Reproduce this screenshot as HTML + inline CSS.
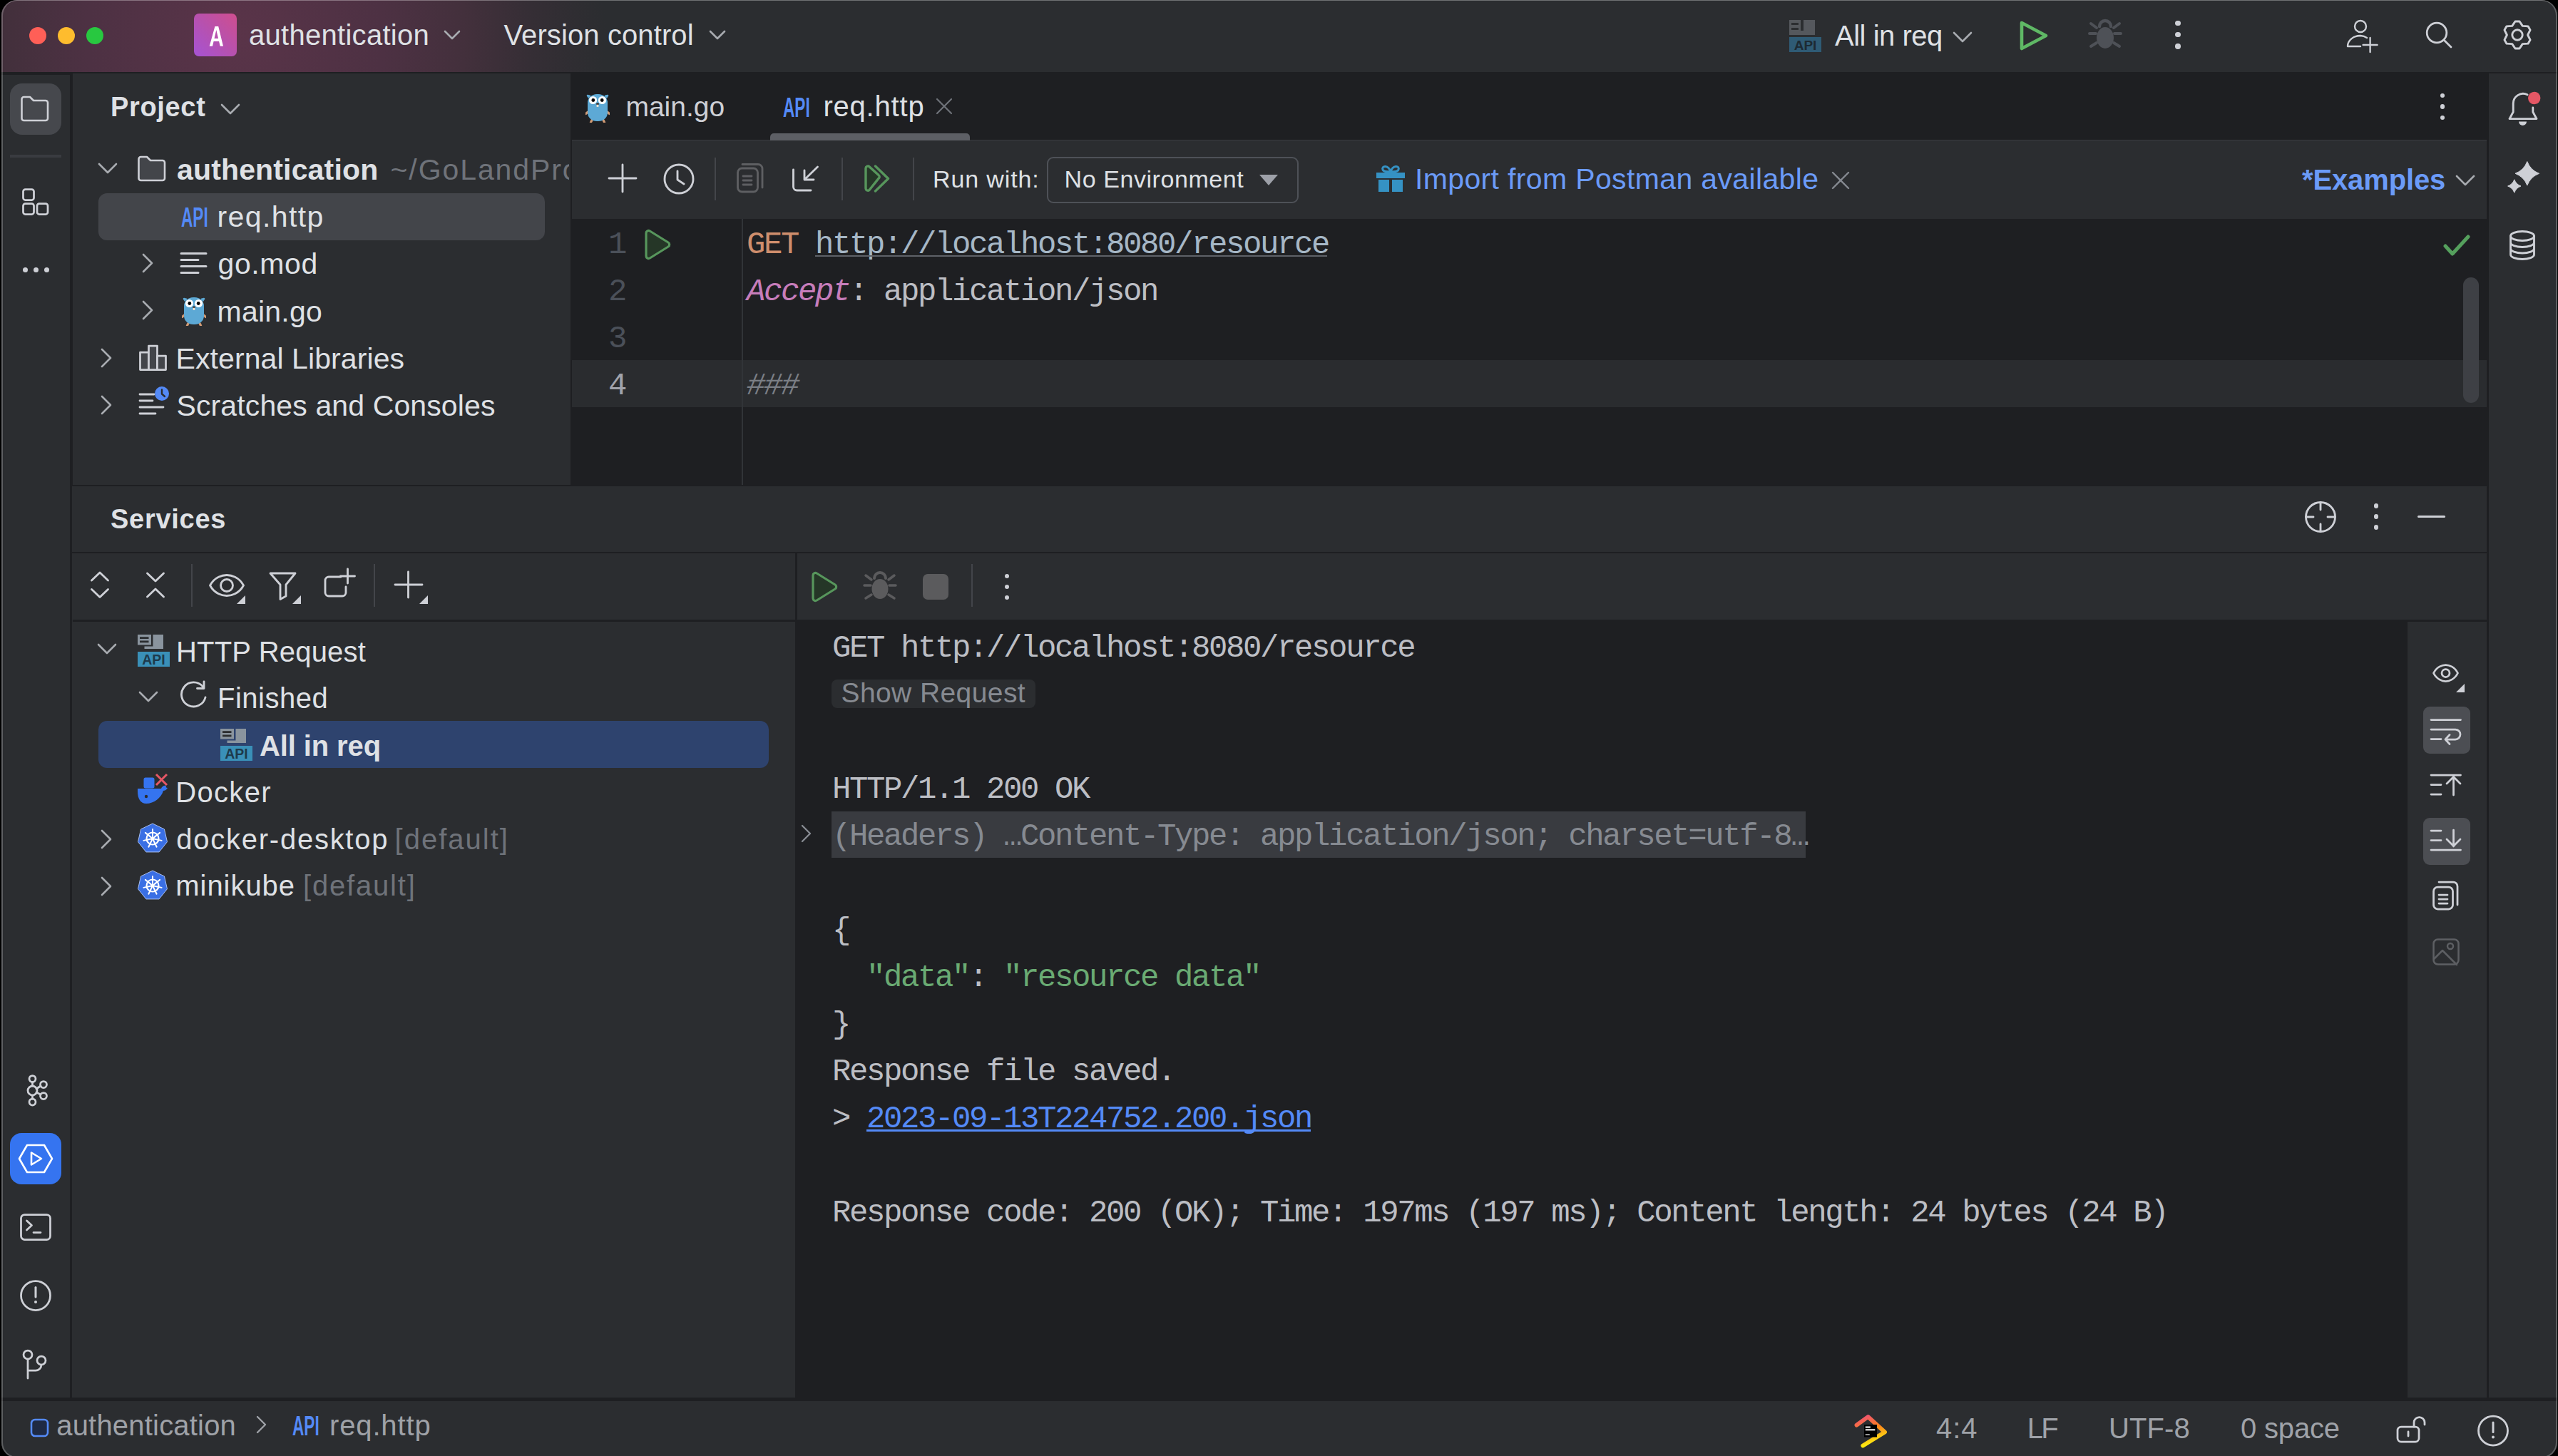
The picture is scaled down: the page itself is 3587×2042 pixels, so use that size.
<!DOCTYPE html><html><head><meta charset="utf-8"><style>
html,body{margin:0;padding:0;background:#000;width:3587px;height:2042px;overflow:hidden}
#win{position:absolute;left:2px;top:0;width:3584px;height:2045px;border-radius:22px;overflow:hidden;background:#2B2D30}
#c{position:absolute;left:-2px;top:0;width:3587px;height:2045px}
#c div,#c svg{position:absolute}
#bd{position:absolute;left:2px;top:0;width:3584px;height:2045px;border-radius:22px;box-sizing:border-box;border:2px solid rgba(255,255,255,0.24);border-top:1.2px solid rgba(255,255,255,0.32);pointer-events:none}
</style></head><body><div id="win"><div id="c">
<div style="left:0px;top:0px;width:3587px;height:101px;background:radial-gradient(ellipse 520px 520px at 330px 50px, #5a3449 0%, #4d3143 40%, #43303c 62%, #352e35 80%, #2B2D30 100%);"></div>
<div style="left:0px;top:101px;width:3587px;height:2px;background:#1E1F22;"></div>
<div style="left:41px;top:38px;width:24px;height:24px;border-radius:50%;background:#FF5F57"></div>
<div style="left:81px;top:38px;width:24px;height:24px;border-radius:50%;background:#FEBC2E"></div>
<div style="left:121px;top:38px;width:24px;height:24px;border-radius:50%;background:#28C840"></div>
<div style="left:272px;top:19px;width:60px;height:60px;border-radius:7px;background:linear-gradient(45deg,#A653D4 0%,#B751AE 50%,#CF4E8E 100%)"></div>
<svg style="left:290px;top:34px;" width="26" height="34" viewBox="0 0 26 34" fill="none"><path fill-rule="evenodd" fill="#FFFFFF" d="M11.4 2.9 L16.2 2.9 L23 30.8 L18.7 30.8 L17.09 24 L9.58 24 L8 30.8 L3.7 30.8 Z M13.3 8 L16.12 19.9 L10.53 19.9 Z"/></svg>
<div style="left:349px;top:29.43px;font-size:40px;line-height:40px;color:#DFE1E5;font-family:'Liberation Sans', sans-serif;white-space:pre;letter-spacing:0.285px;">authentication</div>
<svg style="left:622px;top:42px;" width="24" height="14" viewBox="0 0 24 14" fill="none"><path d="M2 2 L12 12 L22 2" stroke="#A8ABB0" stroke-width="2.6" stroke-linecap="round" stroke-linejoin="round"/></svg>
<div style="left:706.5px;top:29.43px;font-size:40px;line-height:40px;color:#DFE1E5;font-family:'Liberation Sans', sans-serif;white-space:pre;letter-spacing:0.107px;">Version control</div>
<svg style="left:994px;top:42px;" width="24" height="14" viewBox="0 0 24 14" fill="none"><path d="M2 2 L12 12 L22 2" stroke="#A8ABB0" stroke-width="2.6" stroke-linecap="round" stroke-linejoin="round"/></svg>
<div style="left:0px;top:101px;width:98px;height:1861px;background:#1E1F22;"></div>
<div style="left:0px;top:105px;width:98px;height:1857px;background:#2B2D30;"></div>
<div style="left:98px;top:103px;width:4px;height:1859px;background:#1E1F22;"></div>
<div style="left:102px;top:103px;width:698px;height:577px;background:#2B2D30;"></div>
<div style="left:800px;top:103px;width:2px;height:577px;background:#1E1F22;"></div>
<div style="left:802px;top:103px;width:2685px;height:93px;background:#1E1F22;"></div>
<div style="left:802px;top:196px;width:2685px;height:1.5px;background:#393B40;"></div>
<div style="left:802px;top:197px;width:2685px;height:110px;background:#2B2D30;"></div>
<div style="left:802px;top:307px;width:2685px;height:373px;background:#1E1F22;"></div>
<div style="left:101px;top:680px;width:3386px;height:2px;background:#1E1F22;"></div>
<div style="left:101px;top:682px;width:3386px;height:92px;background:#2B2D30;"></div>
<div style="left:101px;top:774px;width:3386px;height:2px;background:#1E1F22;"></div>
<div style="left:101px;top:776px;width:1014px;height:1186px;background:#2B2D30;"></div>
<div style="left:102px;top:869px;width:1013px;height:2.5px;background:#1E1F22;"></div>
<div style="left:1115px;top:776px;width:2.5px;height:1186px;background:#1E1F22;"></div>
<div style="left:1118px;top:776px;width:2369px;height:93px;background:#2B2D30;"></div>
<div style="left:1118px;top:869px;width:2369px;height:3px;background:#1E1F22;"></div>
<div style="left:1118px;top:872px;width:2258px;height:1090px;background:#1E1F22;"></div>
<div style="left:3376px;top:872px;width:111px;height:1090px;background:#2B2D30;"></div>
<div style="left:3487px;top:103px;width:3px;height:1859px;background:#1E1F22;"></div>
<div style="left:3490px;top:105px;width:97px;height:1857px;background:#2B2D30;"></div>
<div style="left:0px;top:1960px;width:3587px;height:5px;background:#1E1F22;"></div>
<div style="left:0px;top:1965px;width:3587px;height:80px;background:#2B2D30;"></div>
<svg style="left:2509px;top:28px;" width="46" height="46" viewBox="0 0 46 46" fill="none"><rect x="0" y="0" width="16" height="21" fill="#55585D"/><rect x="20" y="0" width="16" height="21" fill="#55585D"/><rect x="3" y="4" width="10" height="3" fill="#2B2D30"/><rect x="3" y="11" width="10" height="3" fill="#2B2D30"/><rect x="16" y="15" width="4" height="6" fill="#55585D"/><rect x="0" y="24" width="45" height="21" fill="#2F5B75"/><text x="22.5" y="42" text-anchor="middle" font-family="Liberation Sans" font-weight="700" font-size="19" fill="#1D2A33">API</text></svg>
<div style="left:2573px;top:29.53px;font-size:40px;line-height:40px;color:#DFE1E5;font-family:'Liberation Sans', sans-serif;white-space:pre;letter-spacing:-0.478px;">All in req</div>
<svg style="left:2738px;top:44px;" width="28" height="16" viewBox="0 0 28 16" fill="none"><path d="M2 2 L14.0 14.0 L26 2" stroke="#A8ABB0" stroke-width="2.6" stroke-linecap="round" stroke-linejoin="round"/></svg>
<svg style="left:2830px;top:27px;" width="44" height="46" viewBox="0 0 44 46" fill="none"><path d="M5 5 L39 23 L5 41 Z" stroke="#5FB865" stroke-width="4.6" stroke-linecap="round" stroke-linejoin="round"/></svg>
<svg style="left:2927px;top:25px;" width="50" height="48" viewBox="0 0 50 48" fill="none"><path d="M17 12 a8 8 0 0 1 16 0" stroke="#4E5157" stroke-width="4.4" stroke-linecap="round" stroke-linejoin="round"/><ellipse cx="25" cy="28" rx="12" ry="15" fill="#4E5157"/><path d="M3 22 H12 M38 22 H47 M5 8 L13 14 M45 8 L37 14 M5 40 L13 35 M45 40 L37 35 M3 22" stroke="#4E5157" stroke-width="4" stroke-linecap="round" stroke-linejoin="round"/></svg>
<div style="left:3050.3px;top:28.7px;width:7.4px;height:7.4px;border-radius:50%;background:#CED0D6"></div>
<div style="left:3050.3px;top:45.099999999999994px;width:7.4px;height:7.4px;border-radius:50%;background:#CED0D6"></div>
<div style="left:3050.3px;top:61.3px;width:7.4px;height:7.4px;border-radius:50%;background:#CED0D6"></div>
<svg style="left:3285px;top:24px;" width="56" height="52" viewBox="0 0 56 52" fill="none"><circle cx="25" cy="13" r="8" stroke="#CED0D6" stroke-width="2.4" stroke-linecap="round" stroke-linejoin="round"/><path d="M25 41 H7 a18 15 0 0 1 18 -15 a18 18 0 0 1 9 3" stroke="#CED0D6" stroke-width="2.4" stroke-linecap="round" stroke-linejoin="round"/><path d="M38.6 29 V49 M28.6 39 H48.6" stroke="#CED0D6" stroke-width="2.4" stroke-linecap="round" stroke-linejoin="round"/></svg>
<svg style="left:3395px;top:24px;" width="50" height="50" viewBox="0 0 50 50" fill="none"><circle cx="22" cy="22" r="13.8" stroke="#CED0D6" stroke-width="2.75" stroke-linecap="round" stroke-linejoin="round"/><path d="M32 32 L42 42" stroke="#CED0D6" stroke-width="2.75" stroke-linecap="round" stroke-linejoin="round"/></svg>
<svg style="left:3505px;top:25px;" width="50" height="50" viewBox="0 0 50 50" fill="none"><path d="M21.98 4.94 L28.02 4.94 L32.30 11.36 L40.00 11.85 L43.02 17.08 L39.60 24.00 L43.02 30.92 L40.00 36.15 L32.30 36.64 L28.02 43.06 L21.98 43.06 L17.70 36.64 L10.00 36.15 L6.98 30.92 L10.40 24.00 L6.98 17.08 L10.00 11.85 L17.70 11.36 Z" stroke="#CED0D6" stroke-width="2.9" stroke-linecap="round" stroke-linejoin="round"/><circle cx="25" cy="24" r="7.2" stroke="#CED0D6" stroke-width="2.9" stroke-linecap="round" stroke-linejoin="round"/></svg>
<div style="left:14px;top:117px;width:72px;height:72px;background:#46484D;border-radius:17px"></div>
<svg style="left:27px;top:133px;" width="44" height="40" viewBox="0 0 44 40" fill="none"><path d="M3.5 6 a3 3 0 0 1 3 -3 H15 l5 5 H37 a3 3 0 0 1 3 3 V33 a3 3 0 0 1 -3 3 H6.5 a3 3 0 0 1 -3 -3 Z" fill="none" stroke="#CED0D6" stroke-width="2.6" stroke-linecap="round" stroke-linejoin="round"/></svg>
<div style="left:14px;top:217px;width:72px;height:4px;background:#393B40;"></div>
<svg style="left:30px;top:263px;" width="40" height="40" viewBox="0 0 40 40" fill="none"><rect x="2.5" y="2.5" width="15" height="15" rx="3" stroke="#CED0D6" stroke-width="2.75" stroke-linecap="round" stroke-linejoin="round"/><rect x="2.5" y="22.5" width="15" height="15" rx="3" stroke="#CED0D6" stroke-width="2.75" stroke-linecap="round" stroke-linejoin="round"/><rect x="22" y="22.5" width="15" height="15" rx="3" stroke="#CED0D6" stroke-width="2.75" stroke-linecap="round" stroke-linejoin="round"/></svg>
<div style="left:31.5px;top:375.25px;width:7px;height:7px;border-radius:50%;background:#CED0D6"></div>
<div style="left:46.5px;top:375.25px;width:7px;height:7px;border-radius:50%;background:#CED0D6"></div>
<div style="left:61.5px;top:375.25px;width:7px;height:7px;border-radius:50%;background:#CED0D6"></div>
<div style="left:155px;top:130.83px;font-size:38px;line-height:38px;color:#DFE1E5;font-family:'Liberation Sans', sans-serif;white-space:pre;font-weight:700;letter-spacing:0.667px;">Project</div>
<svg style="left:309px;top:145px;" width="28" height="16" viewBox="0 0 28 16" fill="none"><path d="M2 2 L14.0 14.0 L26 2" stroke="#A8ABB0" stroke-width="2.6" stroke-linecap="round" stroke-linejoin="round"/></svg>
<svg style="left:137px;top:228px;" width="28" height="16" viewBox="0 0 28 16" fill="none"><path d="M2 2 L14.0 14.0 L26 2" stroke="#A8ABB0" stroke-width="2.6" stroke-linecap="round" stroke-linejoin="round"/></svg>
<svg style="left:191px;top:217px;" width="48" height="42" viewBox="0 0 48 42" fill="none"><path d="M3.5 6 a3 3 0 0 1 3 -3 H15 l5 5 H37 a3 3 0 0 1 3 3 V33 a3 3 0 0 1 -3 3 H6.5 a3 3 0 0 1 -3 -3 Z" fill="#43454A" stroke="#CED0D6" stroke-width="2.6" stroke-linecap="round" stroke-linejoin="round"/></svg>
<div style="left:248px;top:217.79px;font-size:41px;line-height:41px;color:#DFE1E5;font-family:'Liberation Sans', sans-serif;white-space:pre;font-weight:700;letter-spacing:0.154px;">authentication</div>
<div style="left:547.5px;top:217.79px;font-size:41px;line-height:41px;color:#6F737A;font-family:'Liberation Sans', sans-serif;white-space:pre;letter-spacing:1.909px;width:250px;overflow:hidden;">~/GoLandProj</div>
<div style="left:138px;top:271px;width:626px;height:66px;background:#43454A;border-radius:12px"></div>
<div style="left:254.0px;top:285.63px;font-size:38px;line-height:38px;color:#548AF7;font-family:'Liberation Sans', sans-serif;white-space:pre;font-weight:700;transform:scaleX(0.595);transform-origin:0 0;">API</div>
<div style="left:304.5px;top:284.04px;font-size:41px;line-height:41px;color:#DFE1E5;font-family:'Liberation Sans', sans-serif;white-space:pre;letter-spacing:1.393px;">req.http</div>
<svg style="left:199px;top:355px;" width="16" height="28" viewBox="0 0 16 28" fill="none"><path d="M2 2 L14.0 14.0 L2 26" stroke="#A8ABB0" stroke-width="2.6" stroke-linecap="round" stroke-linejoin="round"/></svg>
<svg style="left:252px;top:352px;" width="40" height="34" viewBox="0 0 40 34" fill="none"><path d="M2 3.5 H37 M2 12.5 H26 M2 21.5 H37 M2 30.5 H26" stroke="#CED0D6" stroke-width="3" stroke-linecap="round" stroke-linejoin="round"/></svg>
<div style="left:305.5px;top:350.29px;font-size:41px;line-height:41px;color:#DFE1E5;font-family:'Liberation Sans', sans-serif;white-space:pre;letter-spacing:0.6px;">go.mod</div>
<svg style="left:199px;top:421px;" width="16" height="28" viewBox="0 0 16 28" fill="none"><path d="M2 2 L14.0 14.0 L2 26" stroke="#A8ABB0" stroke-width="2.6" stroke-linecap="round" stroke-linejoin="round"/></svg>
<svg style="left:255px;top:415px;" width="34" height="42" viewBox="0 0 34 42" fill="none"><path d="M5 7 l-2 -3 l4 1 M29 7 l2 -3 l-4 1" stroke="#5DA9D5" stroke-width="2.6" stroke-linejoin="round"/><path d="M3.5 27 l-3 2.5 M30.5 27 l3 2.5 M9 38.5 l-1.5 3 M25 38.5 l1.5 3" stroke="#D09A74" stroke-width="3.2" stroke-linecap="round"/><rect x="3" y="2" width="28" height="38" rx="13" ry="12" fill="#5DA9D5"/><circle cx="10.5" cy="10.5" r="5.6" fill="#fff"/><circle cx="23.5" cy="10.5" r="5.6" fill="#fff"/><circle cx="10.8" cy="10.5" r="2.4" fill="#000"/><circle cx="23.2" cy="10.5" r="2.4" fill="#000"/><ellipse cx="17" cy="15.8" rx="2" ry="1.4" fill="#3a2a20"/><rect x="15.6" y="16.8" width="2.8" height="3.2" rx="0.6" fill="#F4E3D0"/></svg>
<div style="left:304.5px;top:416.54px;font-size:41px;line-height:41px;color:#DFE1E5;font-family:'Liberation Sans', sans-serif;white-space:pre;letter-spacing:0.25px;">main.go</div>
<svg style="left:141px;top:488px;" width="16" height="28" viewBox="0 0 16 28" fill="none"><path d="M2 2 L14.0 14.0 L2 26" stroke="#A8ABB0" stroke-width="2.6" stroke-linecap="round" stroke-linejoin="round"/></svg>
<svg style="left:194px;top:482px;" width="44" height="40" viewBox="0 0 44 40" fill="none"><rect x="2.5" y="12" width="12" height="24.5" stroke="#CED0D6" stroke-width="2.75" stroke-linecap="round" stroke-linejoin="round" fill="#43454A"/><rect x="14.5" y="3" width="12" height="33.5" stroke="#CED0D6" stroke-width="2.75" stroke-linecap="round" stroke-linejoin="round" fill="#43454A"/><rect x="26.5" y="17" width="12" height="19.5" stroke="#CED0D6" stroke-width="2.75" stroke-linecap="round" stroke-linejoin="round" fill="#43454A"/></svg>
<div style="left:246.5px;top:482.79px;font-size:41px;line-height:41px;color:#DFE1E5;font-family:'Liberation Sans', sans-serif;white-space:pre;letter-spacing:0.088px;">External Libraries</div>
<svg style="left:141px;top:554px;" width="16" height="28" viewBox="0 0 16 28" fill="none"><path d="M2 2 L14.0 14.0 L2 26" stroke="#A8ABB0" stroke-width="2.6" stroke-linecap="round" stroke-linejoin="round"/></svg>
<svg style="left:194px;top:542px;" width="48" height="44" viewBox="0 0 48 44" fill="none"><path d="M2 11 H22 M2 20 H20 M2 29 H35 M2 38 H24" stroke="#CED0D6" stroke-width="2.8" stroke-linecap="round" stroke-linejoin="round"/><circle cx="33" cy="10" r="10" fill="#548AF7"/><path d="M33 4.5 V10.5 L37 14" stroke="#2B2D30" stroke-width="2.4" stroke-linecap="round" stroke-linejoin="round"/></svg>
<div style="left:247.5px;top:548.54px;font-size:41px;line-height:41px;color:#DFE1E5;font-family:'Liberation Sans', sans-serif;white-space:pre;letter-spacing:0.119px;">Scratches and Consoles</div>
<svg style="left:821px;top:129.75px;" width="34" height="42" viewBox="0 0 34 42" fill="none"><path d="M5 7 l-2 -3 l4 1 M29 7 l2 -3 l-4 1" stroke="#5DA9D5" stroke-width="2.6" stroke-linejoin="round"/><path d="M3.5 27 l-3 2.5 M30.5 27 l3 2.5 M9 38.5 l-1.5 3 M25 38.5 l1.5 3" stroke="#D09A74" stroke-width="3.2" stroke-linecap="round"/><rect x="3" y="2" width="28" height="38" rx="13" ry="12" fill="#5DA9D5"/><circle cx="10.5" cy="10.5" r="5.6" fill="#fff"/><circle cx="23.5" cy="10.5" r="5.6" fill="#fff"/><circle cx="10.8" cy="10.5" r="2.4" fill="#000"/><circle cx="23.2" cy="10.5" r="2.4" fill="#000"/><ellipse cx="17" cy="15.8" rx="2" ry="1.4" fill="#3a2a20"/><rect x="15.6" y="16.8" width="2.8" height="3.2" rx="0.6" fill="#F4E3D0"/></svg>
<div style="left:877.4px;top:129.73px;font-size:39px;line-height:39px;color:#CED0D6;font-family:'Liberation Sans', sans-serif;white-space:pre;">main.go</div>
<div style="left:1097.9px;top:131.53px;font-size:38px;line-height:38px;color:#548AF7;font-family:'Liberation Sans', sans-serif;white-space:pre;font-weight:700;transform:scaleX(0.595);transform-origin:0 0;">API</div>
<div style="left:1154.4px;top:129.13px;font-size:40px;line-height:40px;color:#DFE1E5;font-family:'Liberation Sans', sans-serif;white-space:pre;letter-spacing:0.8px;">req.http</div>
<svg style="left:1311px;top:136px;" width="26" height="26" viewBox="0 0 26 26" fill="none"><path d="M3 3 L23 23 M23 3 L3 23" stroke="#6F737A" stroke-width="2.2" stroke-linecap="round" stroke-linejoin="round"/></svg>
<div style="left:1080px;top:187px;width:280px;height:10px;background:#5D5F65;border-radius:5px 5px 0 0"></div>
<div style="left:3421.8px;top:130.8px;width:6.4px;height:6.4px;border-radius:50%;background:#CED0D6"></div>
<div style="left:3421.8px;top:146.3px;width:6.4px;height:6.4px;border-radius:50%;background:#CED0D6"></div>
<div style="left:3421.8px;top:161.8px;width:6.4px;height:6.4px;border-radius:50%;background:#CED0D6"></div>
<svg style="left:851px;top:228px;" width="44" height="44" viewBox="0 0 44 44" fill="none"><path d="M22 3 V41 M3 22 H41" stroke="#CED0D6" stroke-width="2.85" stroke-linecap="round" stroke-linejoin="round"/></svg>
<svg style="left:929px;top:228px;" width="46" height="46" viewBox="0 0 46 46" fill="none"><circle cx="23" cy="23" r="20" stroke="#CED0D6" stroke-width="2.85" stroke-linecap="round" stroke-linejoin="round"/><path d="M21 12 V24 L30 30" stroke="#CED0D6" stroke-width="2.85" stroke-linecap="round" stroke-linejoin="round"/></svg>
<div style="left:1002px;top:221px;width:2px;height:60px;background:#43454A;"></div>
<svg style="left:1032px;top:228px;" width="42" height="44" viewBox="0 0 42 44" fill="none"><rect x="2.5" y="8" width="28" height="33" rx="6" stroke="#5E5F62" stroke-width="2.85" stroke-linecap="round" stroke-linejoin="round"/><path d="M9 2.5 H31 a6 6 0 0 1 6 6 V35" stroke="#5E5F62" stroke-width="2.85" stroke-linecap="round" stroke-linejoin="round"/><path d="M10 19 H22 M10 25 H22 M10 31 H22" stroke="#5E5F62" stroke-width="2.85" stroke-linecap="round" stroke-linejoin="round"/></svg>
<svg style="left:1108px;top:230px;" width="44" height="42" viewBox="0 0 44 42" fill="none"><path d="M4.5 8 V32 a5 5 0 0 0 5 5 H29" stroke="#CED0D6" stroke-width="2.85" stroke-linecap="round" stroke-linejoin="round"/><path d="M38.5 4 L20 22 M20 9 V22 H33" stroke="#CED0D6" stroke-width="2.85" stroke-linecap="round" stroke-linejoin="round"/></svg>
<div style="left:1180px;top:221px;width:2px;height:60px;background:#43454A;"></div>
<svg style="left:1209px;top:230px;" width="44" height="42" viewBox="0 0 44 42" fill="none"><path d="M5 6 a3 3 0 0 1 5 -2.3 L23 15.5 a3 3 0 0 1 0 4.8 L10 36.5 a3 3 0 0 1 -5 -2.3 Z" fill="#253627" stroke="#57965C" stroke-width="3.4" stroke-linecap="round" stroke-linejoin="round"/><path d="M18.5 3 L36.5 20.5 L18.5 38" stroke="#57965C" stroke-width="3.4" stroke-linecap="round" stroke-linejoin="round"/></svg>
<div style="left:1280px;top:221px;width:2px;height:60px;background:#43454A;"></div>
<div style="left:1308px;top:233.71px;font-size:34px;line-height:34px;color:#DFE1E5;font-family:'Liberation Sans', sans-serif;white-space:pre;letter-spacing:0.875px;">Run with:</div>
<div style="left:1468px;top:219.5px;width:353px;height:65px;background:transparent;box-sizing:border-box;border:2.5px solid #4E5157;border-radius:9px"></div>
<div style="left:1492.5px;top:233.71px;font-size:34px;line-height:34px;color:#DFE1E5;font-family:'Liberation Sans', sans-serif;white-space:pre;letter-spacing:0.577px;">No Environment</div>
<svg style="left:1764px;top:243px;" width="32" height="20" viewBox="0 0 32 20" fill="none"><path d="M2 2 H28 L15 17 Z" fill="#9DA0A8"/></svg>
<svg style="left:1928px;top:229px;" width="44" height="42" viewBox="0 0 44 42" fill="none"><rect x="2" y="13" width="40" height="8" fill="#3592C4"/><rect x="5" y="23" width="15" height="17" fill="#3592C4"/><rect x="24" y="23" width="15" height="17" fill="#3592C4"/><path d="M22 12 c-3 -10 -13 -9 -11 -3 c1 3 6 3 11 3 c5 0 10 0 11 -3 c2 -6 -8 -7 -11 3" stroke="#3592C4" stroke-width="3" stroke-linecap="round" stroke-linejoin="round"/><rect x="20" y="13" width="4" height="27" fill="#2B2D30" opacity="0"/></svg>
<div style="left:1984px;top:230.69px;font-size:41px;line-height:41px;color:#6B9BF8;font-family:'Liberation Sans', sans-serif;white-space:pre;letter-spacing:0.357px;">Import from Postman available</div>
<svg style="left:2567px;top:239px;" width="28" height="28" viewBox="0 0 28 28" fill="none"><path d="M3 3 L25 25 M25 3 L3 25" stroke="#868A91" stroke-width="2.4" stroke-linecap="round" stroke-linejoin="round"/></svg>
<div style="left:3228px;top:231.53px;font-size:40px;line-height:40px;color:#6B9BF8;font-family:'Liberation Sans', sans-serif;white-space:pre;font-weight:700;letter-spacing:-0.125px;">*Examples</div>
<svg style="left:3443px;top:245px;" width="28" height="16" viewBox="0 0 28 16" fill="none"><path d="M2 2 L14.0 14.0 L26 2" stroke="#A8ABB0" stroke-width="2.6" stroke-linecap="round" stroke-linejoin="round"/></svg>
<div style="left:802px;top:505px;width:2685px;height:66px;background:#2A2C2F;"></div>
<div style="left:1040px;top:307px;width:2px;height:373px;background:#313438;"></div>
<div style="left:853px;top:321.29px;font-size:44px;line-height:44px;color:#4B5059;font-family:'Liberation Mono', monospace;white-space:pre;letter-spacing:-2.3999999999999986px;">1</div>
<div style="left:853px;top:387.29px;font-size:44px;line-height:44px;color:#4B5059;font-family:'Liberation Mono', monospace;white-space:pre;letter-spacing:-2.3999999999999986px;">2</div>
<div style="left:853px;top:453.29px;font-size:44px;line-height:44px;color:#4B5059;font-family:'Liberation Mono', monospace;white-space:pre;letter-spacing:-2.3999999999999986px;">3</div>
<div style="left:853px;top:519.29px;font-size:44px;line-height:44px;color:#A1A3AB;font-family:'Liberation Mono', monospace;white-space:pre;letter-spacing:-2.3999999999999986px;">4</div>
<svg style="left:901px;top:321px;" width="42" height="44" viewBox="0 0 42 44" fill="none"><path d="M5 6 a3.5 3.5 0 0 1 5.3 -3 L36 19 a3.5 3.5 0 0 1 0 6 L10.3 41 a3.5 3.5 0 0 1 -5.3 -3 Z" fill="#253627" stroke="#57965C" stroke-width="3.2" stroke-linecap="round" stroke-linejoin="round"/></svg>
<div style="left:1047px;top:321.29px;font-size:44px;line-height:44px;color:#CF8E6D;font-family:'Liberation Mono', monospace;white-space:pre;letter-spacing:-2.3999999999999986px;">GET</div>
<div style="left:1143px;top:321.29px;font-size:44px;line-height:44px;color:#A6B7C6;font-family:'Liberation Mono', monospace;white-space:pre;letter-spacing:-2.3999999999999986px;">http://localhost:8080/resource</div>
<div style="left:1143px;top:357.5px;width:718px;height:2.5px;background:#5E6168;"></div>
<div style="left:1047px;top:387.29px;font-size:44px;line-height:44px;color:#C77DBB;font-family:'Liberation Mono', monospace;white-space:pre;letter-spacing:-2.3999999999999986px;font-style:italic;">Accept</div>
<div style="left:1191px;top:387.29px;font-size:44px;line-height:44px;color:#BCBEC4;font-family:'Liberation Mono', monospace;white-space:pre;letter-spacing:-2.3999999999999986px;">: application/json</div>
<div style="left:1047px;top:519.29px;font-size:44px;line-height:44px;color:#7A7E85;font-family:'Liberation Mono', monospace;white-space:pre;letter-spacing:-2.3999999999999986px;font-style:italic;">###</div>
<svg style="left:3426px;top:328px;" width="38" height="34" viewBox="0 0 38 34" fill="none"><path d="M3 17 L13 28 L35 4" stroke="#55A05D" stroke-width="5" stroke-linecap="round" stroke-linejoin="round"/></svg>
<div style="left:3454px;top:389px;width:22px;height:176px;background:#3E4045;border-radius:11px"></div>
<svg style="left:3514px;top:124px;" width="52" height="56" viewBox="0 0 52 56" fill="none"><path d="M30 8.8 A13.8 13.8 0 0 0 10.2 21.5 V33 L5 42.6 H43 L37.8 33 V27" stroke="#CED0D6" stroke-width="2.85" stroke-linecap="round" stroke-linejoin="round"/><path d="M18 46.6 H29 a5.5 5.3 0 0 1 -11 0 Z" fill="#CED0D6"/><circle cx="39.7" cy="13.5" r="8.7" fill="#E55765"/></svg>
<svg style="left:3510px;top:222px;" width="54" height="54" viewBox="0 0 54 54" fill="none"><path d="M33.80000000000018 4.500000000000011 Q38.33600000000018 16.76400000000001 50.60000000000018 21.30000000000001 Q38.33600000000018 25.836000000000013 33.80000000000018 38.10000000000001 Q29.26400000000018 25.836000000000013 17.00000000000018 21.30000000000001 Q29.26400000000018 16.76400000000001 33.80000000000018 4.500000000000011 Z" fill="#CED0D6" stroke="#CED0D6" stroke-width="1" stroke-linejoin="round"/><path d="M15.800000000000182 29.8 Q18.284000000000184 36.516 25.00000000000018 39 Q18.284000000000184 41.484 15.800000000000182 48.2 Q13.316000000000182 41.484 6.600000000000183 39 Q13.316000000000182 36.516 15.800000000000182 29.8 Z" fill="#CED0D6" stroke="#CED0D6" stroke-width="1" stroke-linejoin="round"/></svg>
<svg style="left:3517px;top:322px;" width="46" height="46" viewBox="0 0 46 46" fill="none"><ellipse cx="20" cy="9" rx="16.5" ry="6.5" stroke="#CED0D6" stroke-width="2.85" stroke-linecap="round" stroke-linejoin="round"/><path d="M3.5 9 V35 c0 3.6 7.4 6.5 16.5 6.5 s16.5 -2.9 16.5 -6.5 V9 M3.5 18 c0 3.6 7.4 6.5 16.5 6.5 s16.5 -2.9 16.5 -6.5 M3.5 26.5 c0 3.6 7.4 6.5 16.5 6.5 s16.5 -2.9 16.5 -6.5" stroke="#CED0D6" stroke-width="2.85" stroke-linecap="round" stroke-linejoin="round"/></svg>
<div style="left:155px;top:708.83px;font-size:38px;line-height:38px;color:#DFE1E5;font-family:'Liberation Sans', sans-serif;white-space:pre;font-weight:700;letter-spacing:0.714px;">Services</div>
<svg style="left:3230px;top:701px;" width="48" height="48" viewBox="0 0 48 48" fill="none"><circle cx="24" cy="24" r="20.5" stroke="#CED0D6" stroke-width="2.85" stroke-linecap="round" stroke-linejoin="round"/><path d="M24 3.5 V14 M24 34 V44.5 M3.5 24 H14 M34 24 H44.5" stroke="#CED0D6" stroke-width="2.85" stroke-linecap="round" stroke-linejoin="round"/></svg>
<div style="left:3328.9px;top:706.4px;width:6.2px;height:6.2px;border-radius:50%;background:#CED0D6"></div>
<div style="left:3328.9px;top:721.4px;width:6.2px;height:6.2px;border-radius:50%;background:#CED0D6"></div>
<div style="left:3328.9px;top:736.4px;width:6.2px;height:6.2px;border-radius:50%;background:#CED0D6"></div>
<div style="left:3390px;top:723px;width:39px;height:3px;background:#CED0D6;border-radius:2px"></div>
<svg style="left:126px;top:801px;" width="28" height="40" viewBox="0 0 28 40" fill="none"><path d="M2.5 13 L14 2 L25.5 13 M2.5 25.5 L14 36.5 L25.5 25.5" stroke="#CED0D6" stroke-width="2.85" stroke-linecap="round" stroke-linejoin="round"/></svg>
<svg style="left:204px;top:801px;" width="28" height="40" viewBox="0 0 28 40" fill="none"><path d="M2.5 3 L14 14 L25.5 3 M2.5 36 L14 25 L25.5 36" stroke="#CED0D6" stroke-width="2.85" stroke-linecap="round" stroke-linejoin="round"/></svg>
<div style="left:268px;top:791px;width:2px;height:60px;background:#43454A;"></div>
<svg style="left:292px;top:804px;" width="52" height="40" viewBox="0 0 52 40" fill="none"><path d="M2.5 17 C9 5 20 2.5 26 2.5 C32 2.5 43 5 49.5 17 C43 29 32 31.5 26 31.5 C20 31.5 9 29 2.5 17 Z" stroke="#CED0D6" stroke-width="2.85" stroke-linecap="round" stroke-linejoin="round"/><circle cx="26" cy="17" r="8.5" stroke="#CED0D6" stroke-width="2.85" stroke-linecap="round" stroke-linejoin="round"/></svg>
<svg style="left:332px;top:835px;" width="13" height="13" viewBox="0 0 13 13" fill="none"><path d="M12 0 V12 H0 Z" fill="#CED0D6"/></svg>
<svg style="left:376px;top:801px;" width="42" height="44" viewBox="0 0 42 44" fill="none"><path d="M3 3 H38 L25 19 V35 L17 39.5 V19 Z" stroke="#CED0D6" stroke-width="2.85" stroke-linecap="round" stroke-linejoin="round"/></svg>
<svg style="left:410px;top:835px;" width="13" height="13" viewBox="0 0 13 13" fill="none"><path d="M12 0 V12 H0 Z" fill="#CED0D6"/></svg>
<svg style="left:451px;top:795px;" width="52" height="50" viewBox="0 0 52 50" fill="none"><path d="M27 14 H10 a5 5 0 0 0 -5 5 V36 a5 5 0 0 0 5 5 H29 a5 5 0 0 0 5 -5 V28" stroke="#CED0D6" stroke-width="2.85" stroke-linecap="round" stroke-linejoin="round"/><path d="M36.5 3 V23 M26.5 13 H46.5" stroke="#CED0D6" stroke-width="2.85" stroke-linecap="round" stroke-linejoin="round"/></svg>
<div style="left:524px;top:791px;width:2px;height:60px;background:#43454A;"></div>
<svg style="left:551px;top:799px;" width="44" height="42" viewBox="0 0 44 42" fill="none"><path d="M21.5 3 V39 M3 21 H41" stroke="#CED0D6" stroke-width="2.85" stroke-linecap="round" stroke-linejoin="round"/></svg>
<svg style="left:588px;top:835px;" width="13" height="13" viewBox="0 0 13 13" fill="none"><path d="M12 0 V12 H0 Z" fill="#CED0D6"/></svg>
<svg style="left:136px;top:902px;" width="28" height="16" viewBox="0 0 28 16" fill="none"><path d="M2 2 L14.0 14.0 L26 2" stroke="#A8ABB0" stroke-width="2.6" stroke-linecap="round" stroke-linejoin="round"/></svg>
<svg style="left:193px;top:890px;" width="46" height="46" viewBox="0 0 46 46" fill="none"><rect x="0" y="0" width="19" height="14.5" fill="#8A949E"/><rect x="3" y="3.2" width="12.5" height="2.8" fill="#2B2D30"/><rect x="3" y="8.5" width="12.5" height="2.8" fill="#2B2D30"/><rect x="21.5" y="0" width="14.5" height="20" fill="#8A949E"/><rect x="9.5" y="16.5" width="26.5" height="3.5" fill="#8A949E"/><rect x="0" y="24" width="45" height="21" fill="#3A90B8"/><text x="22.5" y="42" text-anchor="middle" font-family="Liberation Sans" font-weight="700" font-size="19.5" fill="#1E3A4C">API</text></svg>
<div style="left:247px;top:893.63px;font-size:40px;line-height:40px;color:#DFE1E5;font-family:'Liberation Sans', sans-serif;white-space:pre;letter-spacing:0.182px;">HTTP Request</div>
<svg style="left:194px;top:969px;" width="28" height="16" viewBox="0 0 28 16" fill="none"><path d="M2 2 L14.0 14.0 L26 2" stroke="#A8ABB0" stroke-width="2.6" stroke-linecap="round" stroke-linejoin="round"/></svg>
<svg style="left:251px;top:954px;" width="42" height="44" viewBox="0 0 42 44" fill="none"><path d="M33.5 9 A17 17 0 1 0 37 24" stroke="#CED0D6" stroke-width="2.85" stroke-linecap="round" stroke-linejoin="round"/><path d="M35 2 V11.5 H25.5" stroke="#CED0D6" stroke-width="2.85" stroke-linecap="round" stroke-linejoin="round"/></svg>
<div style="left:305px;top:958.63px;font-size:40px;line-height:40px;color:#DFE1E5;font-family:'Liberation Sans', sans-serif;white-space:pre;letter-spacing:0.5px;">Finished</div>
<div style="left:138px;top:1011px;width:940px;height:66px;background:#2E436E;border-radius:12px"></div>
<svg style="left:308.75px;top:1022px;" width="46" height="46" viewBox="0 0 46 46" fill="none"><rect x="0" y="0" width="19" height="14.5" fill="#8A949E"/><rect x="3" y="3.2" width="12.5" height="2.8" fill="#2B2D30"/><rect x="3" y="8.5" width="12.5" height="2.8" fill="#2B2D30"/><rect x="21.5" y="0" width="14.5" height="20" fill="#8A949E"/><rect x="9.5" y="16.5" width="26.5" height="3.5" fill="#8A949E"/><rect x="0" y="24" width="45" height="21" fill="#3A90B8"/><text x="22.5" y="42" text-anchor="middle" font-family="Liberation Sans" font-weight="700" font-size="19.5" fill="#1E3A4C">API</text></svg>
<div style="left:364px;top:1025.63px;font-size:40px;line-height:40px;color:#DFE1E5;font-family:'Liberation Sans', sans-serif;white-space:pre;font-weight:700;letter-spacing:-0.111px;">All in req</div>
<svg style="left:191px;top:1082px;" width="50" height="50" viewBox="0 0 50 50" fill="none"><rect x="10.5" y="8.5" width="15" height="15" rx="2.5" fill="#3574F0"/><path d="M2 24 H35 c1 -3 4 -5 7 -4 c-1 2 0 3 2 3 c-2 3 -4 4 -6 4 C35 37 25 45 14 45 C6 45 2 38 2 28 Z" fill="#3574F0"/><circle cx="14" cy="35" r="2.2" fill="#2B2D30"/><path d="M28 4 L43 19 M43 4 L28 19" stroke="#E55765" stroke-width="3"/></svg>
<div style="left:246.3px;top:1090.63px;font-size:40px;line-height:40px;color:#DFE1E5;font-family:'Liberation Sans', sans-serif;white-space:pre;letter-spacing:1.3px;">Docker</div>
<svg style="left:141px;top:1163px;" width="16" height="28" viewBox="0 0 16 28" fill="none"><path d="M2 2 L14.0 14.0 L2 26" stroke="#A8ABB0" stroke-width="2.6" stroke-linecap="round" stroke-linejoin="round"/></svg>
<svg style="left:193px;top:1153.5px;" width="42" height="44" viewBox="0 0 42 44" fill="none"><path d="M21.00 1.00 L37.42 8.91 L41.47 26.67 L30.11 40.92 L11.89 40.92 L0.53 26.67 L4.58 8.91 Z" fill="#3A6FE4" stroke="#A9C0F2" stroke-width="1" stroke-linejoin="round"/><circle cx="21" cy="22" r="8.5" stroke="#fff" stroke-width="2.2"/><circle cx="21" cy="22" r="2.6" fill="#fff"/><path d="M21.00 19.00 L21.00 9.00" stroke="#fff" stroke-width="2" stroke-linecap="round"/><path d="M23.35 20.13 L31.16 13.89" stroke="#fff" stroke-width="2" stroke-linecap="round"/><path d="M23.92 22.67 L33.67 24.89" stroke="#fff" stroke-width="2" stroke-linecap="round"/><path d="M22.30 24.70 L26.64 33.71" stroke="#fff" stroke-width="2" stroke-linecap="round"/><path d="M19.70 24.70 L15.36 33.71" stroke="#fff" stroke-width="2" stroke-linecap="round"/><path d="M18.08 22.67 L8.33 24.89" stroke="#fff" stroke-width="2" stroke-linecap="round"/><path d="M18.65 20.13 L10.84 13.89" stroke="#fff" stroke-width="2" stroke-linecap="round"/></svg>
<div style="left:247.3px;top:1157.13px;font-size:40px;line-height:40px;color:#DFE1E5;font-family:'Liberation Sans', sans-serif;white-space:pre;letter-spacing:1.746px;">docker-desktop</div>
<div style="left:553.6px;top:1157.13px;font-size:40px;line-height:40px;color:#6F737A;font-family:'Liberation Sans', sans-serif;white-space:pre;letter-spacing:2.0px;">[default]</div>
<svg style="left:141px;top:1229px;" width="16" height="28" viewBox="0 0 16 28" fill="none"><path d="M2 2 L14.0 14.0 L2 26" stroke="#A8ABB0" stroke-width="2.6" stroke-linecap="round" stroke-linejoin="round"/></svg>
<svg style="left:193px;top:1219.5px;" width="42" height="44" viewBox="0 0 42 44" fill="none"><path d="M21.00 1.00 L37.42 8.91 L41.47 26.67 L30.11 40.92 L11.89 40.92 L0.53 26.67 L4.58 8.91 Z" fill="#3A6FE4" stroke="#A9C0F2" stroke-width="1" stroke-linejoin="round"/><circle cx="21" cy="22" r="8.5" stroke="#fff" stroke-width="2.2"/><circle cx="21" cy="22" r="2.6" fill="#fff"/><path d="M21.00 19.00 L21.00 9.00" stroke="#fff" stroke-width="2" stroke-linecap="round"/><path d="M23.35 20.13 L31.16 13.89" stroke="#fff" stroke-width="2" stroke-linecap="round"/><path d="M23.92 22.67 L33.67 24.89" stroke="#fff" stroke-width="2" stroke-linecap="round"/><path d="M22.30 24.70 L26.64 33.71" stroke="#fff" stroke-width="2" stroke-linecap="round"/><path d="M19.70 24.70 L15.36 33.71" stroke="#fff" stroke-width="2" stroke-linecap="round"/><path d="M18.08 22.67 L8.33 24.89" stroke="#fff" stroke-width="2" stroke-linecap="round"/><path d="M18.65 20.13 L10.84 13.89" stroke="#fff" stroke-width="2" stroke-linecap="round"/></svg>
<div style="left:246.3px;top:1222.13px;font-size:40px;line-height:40px;color:#DFE1E5;font-family:'Liberation Sans', sans-serif;white-space:pre;letter-spacing:0.957px;">minikube</div>
<div style="left:425px;top:1222.13px;font-size:40px;line-height:40px;color:#6F737A;font-family:'Liberation Sans', sans-serif;white-space:pre;letter-spacing:1.812px;">[default]</div>
<svg style="left:1135px;top:801px;" width="44" height="44" viewBox="0 0 44 44" fill="none"><path d="M5 6 a3.5 3.5 0 0 1 5.3 -3 L36 19 a3.5 3.5 0 0 1 0 6 L10.3 41 a3.5 3.5 0 0 1 -5.3 -3 Z" fill="#253627" stroke="#57965C" stroke-width="3.2" stroke-linecap="round" stroke-linejoin="round"/></svg>
<svg style="left:1209px;top:799px;" width="50" height="48" viewBox="0 0 50 48" fill="none"><path d="M17 12 a8 8 0 0 1 16 0" stroke="#5B5B5D" stroke-width="4" stroke-linecap="round" stroke-linejoin="round"/><ellipse cx="25" cy="27" rx="11.5" ry="14" fill="#5B5B5D"/><path d="M3 22 H12 M38 22 H47 M5 8 L13 14 M45 8 L37 14 M5 40 L13 35 M45 40 L37 35" stroke="#5B5B5D" stroke-width="3.5" stroke-linecap="round" stroke-linejoin="round"/></svg>
<div style="left:1294px;top:805px;width:36px;height:36px;background:#5B5B5D;border-radius:7px"></div>
<div style="left:1362px;top:791px;width:2px;height:60px;background:#43454A;"></div>
<div style="left:1408.5px;top:804.9px;width:6.2px;height:6.2px;border-radius:50%;background:#CED0D6"></div>
<div style="left:1408.5px;top:819.9px;width:6.2px;height:6.2px;border-radius:50%;background:#CED0D6"></div>
<div style="left:1408.5px;top:834.9px;width:6.2px;height:6.2px;border-radius:50%;background:#CED0D6"></div>
<div style="left:1167px;top:887.29px;font-size:44px;line-height:44px;color:#BCBEC4;font-family:'Liberation Mono', monospace;white-space:pre;letter-spacing:-2.3999999999999986px;">GET http://localhost:8080/resource</div>
<div style="left:1166px;top:953px;width:286px;height:40px;background:#2B2D30;border-radius:8px"></div>
<div style="left:1179.5px;top:951.98px;font-size:39px;line-height:39px;color:#868A91;font-family:'Liberation Sans', sans-serif;white-space:pre;letter-spacing:0.409px;">Show Request</div>
<div style="left:1167px;top:1085.29px;font-size:44px;line-height:44px;color:#BCBEC4;font-family:'Liberation Mono', monospace;white-space:pre;letter-spacing:-2.3999999999999986px;">HTTP/1.1 200 OK</div>
<div style="left:1166px;top:1137.5px;width:1366px;height:65px;background:#393B40;"></div>
<svg style="left:1123px;top:1156px;" width="15" height="26" viewBox="0 0 15 26" fill="none"><path d="M2 2 L13.0 13.0 L2 24" stroke="#868A91" stroke-width="2.4" stroke-linecap="round" stroke-linejoin="round"/></svg>
<div style="left:1167px;top:1151.29px;font-size:44px;line-height:44px;color:#868A91;font-family:'Liberation Mono', monospace;white-space:pre;letter-spacing:-2.3999999999999986px;">(Headers) …Content-Type: application/json; charset=utf-8…</div>
<div style="left:1167px;top:1283.29px;font-size:44px;line-height:44px;color:#BCBEC4;font-family:'Liberation Mono', monospace;white-space:pre;letter-spacing:-2.3999999999999986px;">{</div>
<div style="left:1167px;top:1349.29px;font-size:44px;line-height:44px;color:#6AAB73;font-family:'Liberation Mono', monospace;white-space:pre;letter-spacing:-2.3999999999999986px;">  "data": "resource data"</div>
<div style="left:1359px;top:1349.29px;font-size:44px;line-height:44px;color:#BCBEC4;font-family:'Liberation Mono', monospace;white-space:pre;letter-spacing:-2.3999999999999986px;background:#1E1F22;">:</div>
<div style="left:1167px;top:1415.29px;font-size:44px;line-height:44px;color:#BCBEC4;font-family:'Liberation Mono', monospace;white-space:pre;letter-spacing:-2.3999999999999986px;">}</div>
<div style="left:1167px;top:1481.29px;font-size:44px;line-height:44px;color:#BCBEC4;font-family:'Liberation Mono', monospace;white-space:pre;letter-spacing:-2.3999999999999986px;">Response file saved.</div>
<div style="left:1167px;top:1547.29px;font-size:44px;line-height:44px;color:#BCBEC4;font-family:'Liberation Mono', monospace;white-space:pre;letter-spacing:-2.3999999999999986px;">> </div>
<div style="left:1215px;top:1547.29px;font-size:44px;line-height:44px;color:#548AF7;font-family:'Liberation Mono', monospace;white-space:pre;letter-spacing:-2.3999999999999986px;">2023-09-13T224752.200.json</div>
<div style="left:1215px;top:1584px;width:623px;height:2.5px;background:#548AF7;"></div>
<div style="left:1167px;top:1679.29px;font-size:44px;line-height:44px;color:#BCBEC4;font-family:'Liberation Mono', monospace;white-space:pre;letter-spacing:-2.3999999999999986px;">Response code: 200 (OK); Time: 197ms (197 ms); Content length: 24 bytes (24 B)</div>
<svg style="left:3410px;top:930px;" width="42" height="30" viewBox="0 0 42 30" fill="none"><path d="M2.5 14 C7 5 15 2.5 19.5 2.5 C24 2.5 32 5 36.5 14 C32 23 24 25.5 19.5 25.5 C15 25.5 7 23 2.5 14 Z" stroke="#CED0D6" stroke-width="2.75" stroke-linecap="round" stroke-linejoin="round"/><circle cx="19.5" cy="14" r="5.5" stroke="#CED0D6" stroke-width="2.75" stroke-linecap="round" stroke-linejoin="round"/></svg>
<svg style="left:3444px;top:959px;" width="13" height="13" viewBox="0 0 13 13" fill="none"><path d="M12 0 V12 H0 Z" fill="#CED0D6"/></svg>
<div style="left:3398px;top:991px;width:66px;height:66px;background:#4C4E53;border-radius:9px"></div>
<svg style="left:3406px;top:1005px;" width="50" height="42" viewBox="0 0 50 42" fill="none"><path d="M3 4.5 H44.5 M3 18 H37 a7 7 0 0 1 0 14 H24 M3 31.5 H17 M29 25.5 L23 32 L29 38.5" stroke="#CED0D6" stroke-width="2.75" stroke-linecap="round" stroke-linejoin="round"/></svg>
<svg style="left:3406px;top:1082px;" width="50" height="40" viewBox="0 0 50 40" fill="none"><path d="M3 5 H44.5 M3 18.5 H17 M3 32 H17 M34.5 33 V7 M25 17 L34.5 7.5 L44 17" stroke="#CED0D6" stroke-width="2.75" stroke-linecap="round" stroke-linejoin="round"/></svg>
<div style="left:3398px;top:1147px;width:66px;height:66px;background:#4C4E53;border-radius:9px"></div>
<svg style="left:3406px;top:1160px;" width="50" height="40" viewBox="0 0 50 40" fill="none"><path d="M3 5 H17 M3 18.5 H17 M3 32 H44.5 M34.5 4 V27 M25 17 L34.5 26.5 L44 17" stroke="#CED0D6" stroke-width="2.75" stroke-linecap="round" stroke-linejoin="round"/></svg>
<svg style="left:3410px;top:1234px;" width="42" height="44" viewBox="0 0 42 44" fill="none"><rect x="2.5" y="10" width="27" height="31" rx="6" stroke="#CED0D6" stroke-width="2.75" stroke-linecap="round" stroke-linejoin="round"/><path d="M10 3 H30 a6 6 0 0 1 6 6 V35" stroke="#CED0D6" stroke-width="2.75" stroke-linecap="round" stroke-linejoin="round"/><path d="M10 21 H22 M10 27 H22 M10 33 H22" stroke="#CED0D6" stroke-width="2.75" stroke-linecap="round" stroke-linejoin="round"/></svg>
<svg style="left:3410px;top:1315px;" width="42" height="44" viewBox="0 0 42 44" fill="none"><rect x="2.5" y="2.5" width="35" height="35" rx="6" stroke="#5D5F63" stroke-width="2.5" stroke-linecap="round" stroke-linejoin="round"/><circle cx="26" cy="12" r="4" stroke="#5D5F63" stroke-width="2.5" stroke-linecap="round" stroke-linejoin="round"/><path d="M3 30 L15 18 L35 38" stroke="#5D5F63" stroke-width="2.5" stroke-linecap="round" stroke-linejoin="round"/></svg>
<svg style="left:34px;top:1505px;" width="36" height="48" viewBox="0 0 36 48" fill="none"><circle cx="11.5" cy="24.5" r="6.5" stroke="#CED0D6" stroke-width="2.75" stroke-linecap="round" stroke-linejoin="round"/><circle cx="11.5" cy="8" r="4.5" stroke="#CED0D6" stroke-width="2.75" stroke-linecap="round" stroke-linejoin="round"/><circle cx="11.5" cy="40.5" r="4.5" stroke="#CED0D6" stroke-width="2.75" stroke-linecap="round" stroke-linejoin="round"/><circle cx="27" cy="16" r="4.5" stroke="#CED0D6" stroke-width="2.75" stroke-linecap="round" stroke-linejoin="round"/><circle cx="27" cy="32" r="4.5" stroke="#CED0D6" stroke-width="2.75" stroke-linecap="round" stroke-linejoin="round"/><path d="M11.5 12.5 V18 M11.5 31 V36 M17 22 L23 18 M17 27 L23 30" stroke="#CED0D6" stroke-width="2.75" stroke-linecap="round" stroke-linejoin="round"/></svg>
<div style="left:14px;top:1589px;width:72px;height:72px;background:#3574F0;border-radius:16px"></div>
<svg style="left:25px;top:1603px;" width="50" height="44" viewBox="0 0 50 44" fill="none"><path d="M13 3 H37 L48 22 L37 41 H13 L2 22 Z" stroke="#FFFFFF" stroke-width="2.6" stroke-linecap="round" stroke-linejoin="round"/><path d="M19 13.5 V30.5 L33 22 Z" stroke="#FFFFFF" stroke-width="2.6" stroke-linecap="round" stroke-linejoin="round"/></svg>
<svg style="left:27px;top:1701px;" width="46" height="40" viewBox="0 0 46 40" fill="none"><rect x="2.5" y="2.5" width="41" height="35" rx="5" stroke="#CED0D6" stroke-width="2.75" stroke-linecap="round" stroke-linejoin="round"/><path d="M10.5 11 L17.5 17.5 L10.5 24 M20 27.5 H30" stroke="#CED0D6" stroke-width="2.75" stroke-linecap="round" stroke-linejoin="round"/></svg>
<svg style="left:27px;top:1794px;" width="46" height="46" viewBox="0 0 46 46" fill="none"><circle cx="23" cy="23" r="20.5" stroke="#CED0D6" stroke-width="2.75" stroke-linecap="round" stroke-linejoin="round"/><path d="M23 11.5 V25" stroke="#CED0D6" stroke-width="3" stroke-linecap="round" stroke-linejoin="round"/><circle cx="23" cy="32" r="2" fill="#CED0D6"/></svg>
<svg style="left:29px;top:1891px;" width="40" height="46" viewBox="0 0 40 46" fill="none"><circle cx="10" cy="9" r="6" stroke="#CED0D6" stroke-width="2.75" stroke-linecap="round" stroke-linejoin="round"/><circle cx="29" cy="17" r="6" stroke="#CED0D6" stroke-width="2.75" stroke-linecap="round" stroke-linejoin="round"/><path d="M10 15 V42 M10 31 H21 a8 8 0 0 0 8 -8" stroke="#CED0D6" stroke-width="2.75" stroke-linecap="round" stroke-linejoin="round"/></svg>
<svg style="left:42px;top:1989px;" width="28" height="28" viewBox="0 0 28 28" fill="none"><rect x="2" y="2" width="23" height="23" rx="5" fill="#1F2A44" stroke="#548AF7" stroke-width="2.6" stroke-linecap="round" stroke-linejoin="round"/></svg>
<div style="left:79.2px;top:1978.53px;font-size:40px;line-height:40px;color:#9FA2A8;font-family:'Liberation Sans', sans-serif;white-space:pre;letter-spacing:0.2px;">authentication</div>
<svg style="left:358.5px;top:1985px;" width="15" height="26" viewBox="0 0 15 26" fill="none"><path d="M2 2 L13.0 13.0 L2 24" stroke="#9FA2A8" stroke-width="2.4" stroke-linecap="round" stroke-linejoin="round"/></svg>
<div style="left:410.4px;top:1980.83px;font-size:38px;line-height:38px;color:#548AF7;font-family:'Liberation Sans', sans-serif;white-space:pre;font-weight:700;transform:scaleX(0.595);transform-origin:0 0;">API</div>
<div style="left:462px;top:1978.53px;font-size:40px;line-height:40px;color:#9FA2A8;font-family:'Liberation Sans', sans-serif;white-space:pre;letter-spacing:0.857px;">req.http</div>
<svg style="left:2600px;top:1983px;" width="48" height="50" viewBox="0 0 48 50" fill="none"><defs><linearGradient id="jg" x1="0" y1="0" x2="0.3" y2="1"><stop offset="0" stop-color="#F0507A"/><stop offset="0.5" stop-color="#FC801D"/><stop offset="1" stop-color="#FDE910"/></linearGradient></defs><path d="M3.5 15.7 L19.5 4 L43 25.5 L12.3 44.5" stroke="url(#jg)" stroke-width="5.8" stroke-linecap="round" stroke-linejoin="round"/><rect x="14" y="15" width="18" height="17.5" fill="#000"/><rect x="15.8" y="17.5" width="7" height="2" fill="#fff"/><rect x="15.8" y="21.3" width="13.5" height="2" fill="#fff"/><rect x="15.8" y="28.3" width="6" height="1.5" fill="#ccc"/></svg>
<div style="left:2715px;top:1983.13px;font-size:40px;line-height:40px;color:#9FA2A8;font-family:'Liberation Sans', sans-serif;white-space:pre;letter-spacing:1.0px;">4:4</div>
<div style="left:2842.7px;top:1983.13px;font-size:40px;line-height:40px;color:#9FA2A8;font-family:'Liberation Sans', sans-serif;white-space:pre;letter-spacing:-2.7px;">LF</div>
<div style="left:2957px;top:1983.13px;font-size:40px;line-height:40px;color:#9FA2A8;font-family:'Liberation Sans', sans-serif;white-space:pre;letter-spacing:0.1px;">UTF-8</div>
<div style="left:3142px;top:1983.13px;font-size:40px;line-height:40px;color:#9FA2A8;font-family:'Liberation Sans', sans-serif;white-space:pre;letter-spacing:-0.167px;">0 space</div>
<svg style="left:3359px;top:1984px;" width="46" height="42" viewBox="0 0 46 42" fill="none"><rect x="3" y="17" width="30" height="21" rx="5" stroke="#CED0D6" stroke-width="2.75" stroke-linecap="round" stroke-linejoin="round"/><path d="M18 24 V30" stroke="#CED0D6" stroke-width="2.8" stroke-linecap="round" stroke-linejoin="round"/><path d="M26 17 V11 a7.5 7.5 0 0 1 15 0 V14" stroke="#CED0D6" stroke-width="2.75" stroke-linecap="round" stroke-linejoin="round"/></svg>
<svg style="left:3473px;top:1983px;" width="46" height="46" viewBox="0 0 46 46" fill="none"><circle cx="23" cy="23.5" r="20.5" stroke="#CED0D6" stroke-width="2.75" stroke-linecap="round" stroke-linejoin="round"/><path d="M23 12 V25.5" stroke="#CED0D6" stroke-width="3" stroke-linecap="round" stroke-linejoin="round"/><circle cx="23" cy="32.5" r="2" fill="#CED0D6"/></svg>
</div></div><div id="bd"></div></body></html>
